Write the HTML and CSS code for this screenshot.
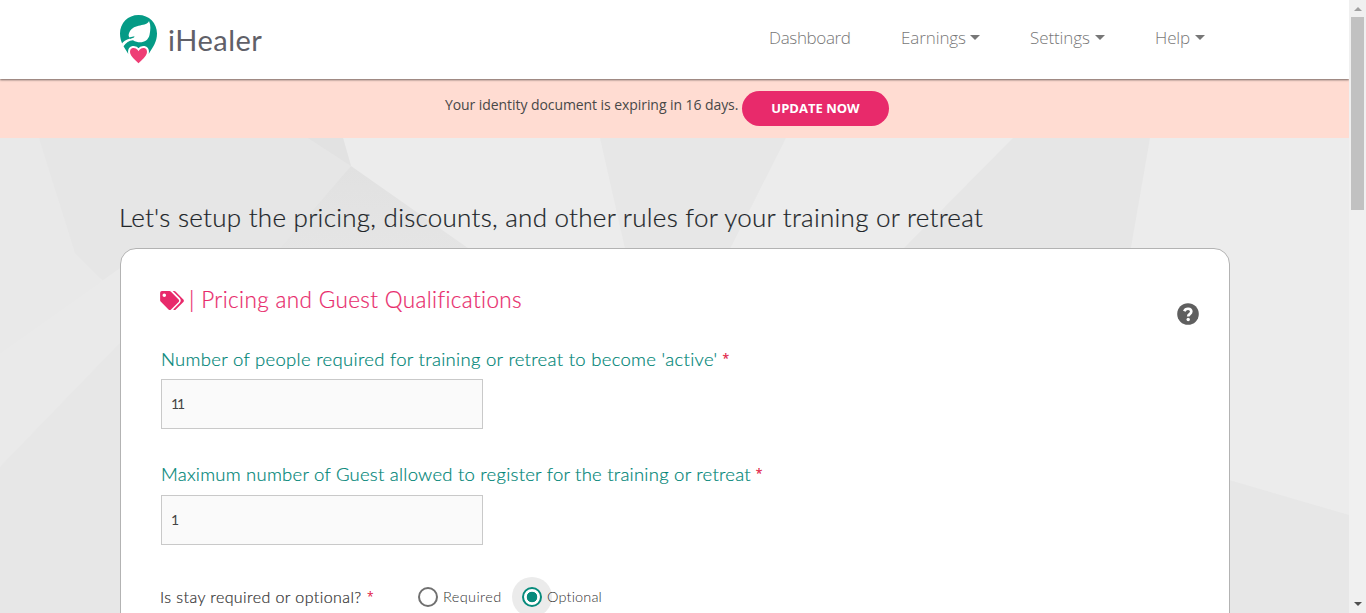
FILE: index.html
```html
<!DOCTYPE html>
<html lang="en">
<head>
<meta charset="utf-8">
<title>iHealer</title>
<link rel="stylesheet" href="styles.css">
</head>
<body>
<div class="page">
  <header class="header">
    <a class="logo">
      <svg class="logo-mark" viewBox="0 0 38 50" width="38" height="50">
        <path fill="#059b86" d="M18.500 0C8 0 0 8 0 18.500C0 27 4 32 8 38.500H29C33 32 37 27 37 18.500C37 8 29 0 18.500 0Z"/>
        <path fill="#fff" d="M29 6C27 12 14 8 9.500 17C8 20 8.500 21.500 10 23.500C6 24.500 3 26.500 1.700 29L3.300 31.500C6 28 9 25.500 13 25.300C20 29.500 28 27 29.500 20C30.500 15 31 10 29 6Z"/>
        <path fill="#059b86" d="M9 22.500L14.500 21.300L14 22.500L10 24Z"/>
        <path fill="#ee3e75" stroke="#fff" stroke-width="2" d="M18.500 50C16 46 9 43 9 37C9 31 15.500 30.500 18.500 34.500C21.500 30.500 28 31 28 37C28 43 21 46 18.500 50Z"/>
      </svg>
      <span class="logo-text">iHealer</span>
    </a>
    <nav class="nav">
      <a class="nav-item dashboard">Dashboard</a>
      <a class="nav-item earnings">Earnings<i class="caret"></i></a>
      <a class="nav-item settings">Settings<i class="caret"></i></a>
      <a class="nav-item help">Help<i class="caret"></i></a>
    </nav>
  </header>
  <div class="notice">
    <span class="notice-text">Your identity document is expiring in 16 days.</span>
    <button class="update">UPDATE NOW</button>
  </div>
  <main class="main">
    <svg class="facets" viewBox="0 0 1349 475" preserveAspectRatio="none">
      <defs>
        <linearGradient id="fade" x1="0" y1="0" x2="0" y2="1"><stop offset="0" stop-color="#e1e1e1"/><stop offset="1" stop-color="#e5e5e5"/></linearGradient>
      </defs>
      <rect width="1349" height="475" fill="#ececec"/>
      <path fill="#e9e9e9" d="M0 0H39L92 115L120 200V475H0Z"/>
      <path fill="#e6e6e6" d="M39 0H343L351 28L276 130H120V160L75 115Z"/>
      <path fill="#eaeaea" d="M0 215L120 130V235L0 355Z"/>
      <path fill="#e7e7e7" d="M0 340L120 325V475H0Z"/>
      <path fill="#e7e7e7" d="M0 329L120 205V475H0Z"/>
      <path fill="#e2e2e2" d="M308 0H343L351 28Z"/>
      <path fill="url(#fade)" d="M351 28L475 115H276Z"/>
      <path fill="#e7e7e7" d="M600 0H786L728 115H626Z"/>
      <path fill="#e6e6e6" d="M1013 0H1150L1130 115H899Z"/>
      <path fill="#e7e7e7" d="M1229 342L1349 377V475H1229Z"/>
    </svg>
    <h1 class="title">Let's setup the pricing, discounts, and other rules for your training or retreat</h1>
    <section class="card">
      <div class="card-head">
        <svg class="tags" viewBox="0 0 640 512" width="24" height="19"><path fill="#e82a6b" d="M497.900 225.900 286.100 14.100A48 48 0 0 0 252.100 0H48A48 48 0 0 0 0 48V252.100A48 48 0 0 0 14.100 286.100L225.900 497.900C244.700 516.700 275.100 516.700 293.800 497.900L497.900 293.800C516.700 275.100 516.700 244.700 497.900 225.900ZM112 160A48 48 0 1 1 112 64A48 48 0 0 1 112 160ZM625.900 293.800 421.800 497.900C403 516.700 372.600 516.700 353.900 497.900L353.500 497.500 527.600 323.500C545.600 305.400 555.600 281.400 555.600 256C555.600 230.500 545.600 206.500 527.600 188.500L339 0H380.100A48 48 0 0 1 414.100 14.100L625.900 225.900C644.700 244.700 644.700 275.100 625.900 293.800Z"/></svg>
        <h2 class="subtitle">| Pricing and Guest Qualifications</h2>
        <svg class="question" viewBox="0 0 22 22" width="22" height="22"><circle cx="11" cy="11" r="10.800" fill="#5f5f5f"/><path d="M7.300 8.200C8.500 4.800 14.300 5 14.300 8.600C14.300 11.300 11.200 11 11.200 13.500" fill="none" stroke="#fff" stroke-width="2.700"/><circle cx="11.200" cy="16.500" r="1.700" fill="#fff"/></svg>
      </div>
      <label class="label first"><span>Number of people required for training or retreat to become 'active'</span> <b class="star">*</b></label>
      <input class="field" type="text" value="11">
      <label class="label second"><span>Maximum number of Guest allowed to register for the training or retreat</span> <b class="star">*</b></label>
      <input class="field" type="text" value="1">
      <div class="stay">
        <span class="stay-text">Is stay required or optional?</span><b class="star stay-star">*</b>
        <span class="radio"></span><span class="choice">Required</span>
        <span class="halo"><span class="radio on"></span></span><span class="choice optional">Optional</span>
      </div>
    </section>
  </main>
</div>
<div class="scrollbar"><i class="up"></i><div class="thumb"></div><i class="down"></i></div>
</body>
</html>
```
FILE: styles.css
```css
* { box-sizing: border-box; }
body { margin: 0; height: 613px; overflow: hidden; display: flex; font-family: Lato, "Open Sans", sans-serif; font-weight: 300; }
.page { width: 1349px; height: 613px; overflow: hidden; display: flex; flex-direction: column; }
.header { height: 79px; flex: none; background: #fff; display: flex; padding: 0 0 0 120px; box-shadow: 0 1px 2px rgba(0,0,0,.55); position: relative; }
.logo { display: flex; width: 649px; padding-top: 15px; }
.logo-mark { flex: none; }
.logo-text { margin: 6px 0 0 10px; font: 400 29px/38px Lato, sans-serif; color: #606068; letter-spacing: .5px; }
.nav { display: flex; padding-top: 26px; }
.nav-item { font: 300 17px/24px "Open Sans", sans-serif; color: #777; white-space: nowrap; width: 132px; display: flex; align-items: flex-start; letter-spacing: -.1px; }
.nav-item.dashboard { letter-spacing: -.35px; }
.nav-item.earnings { width: 129px; }
.nav-item.settings { width: 125px; }
.caret { border: 5px solid transparent; border-top-color: #777; border-bottom: 0; margin: 9px 0 0 5px; }
.earnings .caret { margin-left: 4px; }
.notice { height: 59px; flex: none; background: #ffdcd2; display: flex; padding: 12px 0 0 445px; }
.notice-text { width: 297px; font: 400 14px/28px "Open Sans", sans-serif; color: #484848; white-space: nowrap; letter-spacing: -.07px; }
.update { width: 147px; height: 35px; padding: 0; border: 0; border-radius: 18px; background: #e82a6b; color: #fff; font: 700 13px/35px "Open Sans", sans-serif; }
.main { height: 475px; flex: none; position: relative; padding: 62px 0 0 120px; overflow: hidden; }
.facets { position: absolute; left: 0; top: 0; width: 1349px; height: 475px; z-index: -1; }
.title { margin: 0 0 0 -1px; height: 48px; font-size: 26px; line-height: 35px; font-weight: 300; color: #212529; white-space: nowrap; letter-spacing: .26px; -webkit-text-stroke: .2px; }
.card { width: 1110px; height: 420px; background: #fff; border: 1px solid #b3b3b3; border-radius: 16px; padding: 35px 30px 0 40px; display: flex; flex-direction: column; align-items: flex-start; }
.card-head { display: flex; width: 100%; height: 57px; flex: none; }
.tags { margin: 7px 5px 0 -1px; flex: none; }
.subtitle { margin: 0; font-size: 22.5px; line-height: 32px; font-weight: 300; color: #e82a6b; white-space: nowrap; letter-spacing: .37px; -webkit-text-stroke: .2px; }
.question { margin: 19px 0 0 auto; flex: none; }
.label { font-size: 18.5px; line-height: 36px; height: 38px; flex: none; color: #008577; white-space: nowrap; display: flex; gap: 5px; letter-spacing: .3px; -webkit-text-stroke: .2px; }
.star { color: #df1642; font: 400 12px/36px "Open Sans", sans-serif; letter-spacing: 0; }
.field { width: 322px; height: 50px; flex: none; border: 1px solid #c9c9c9; background: #fafafa; padding: 0 9px 2px; font: 400 14px Lato, sans-serif; color: #444; outline: 0; letter-spacing: -2px; }
.second { margin-top: 27px; height: 39px; letter-spacing: .24px; }
.stay { display: flex; height: 40px; margin-top: 32px; margin-left: -1px; align-items: center; white-space: nowrap; flex: none; color: #333; }
.stay-text { width: 207px; font-size: 16px; letter-spacing: .42px; -webkit-text-stroke: .2px; padding-bottom: 2px; }
.stay-star { width: 51px; }
.radio { width: 20px; height: 20px; flex: none; border: 2px solid #707070; border-radius: 50%; display: block; }
.choice { margin-left: 5px; width: 69px; font-size: 14.500px; letter-spacing: .4px; padding-bottom: 2px; }
.halo { width: 40px; height: 40px; border-radius: 50%; background: #ebebeb; display: grid; place-items: center; flex: none; }
.radio.on { border-color: #078b7c; background: radial-gradient(circle, #078b7c 5px, #fff 5.6px); }
.optional { margin-left: -5px; letter-spacing: .15px; }
.scrollbar { width: 17px; height: 613px; background: #f0f0f0; display: flex; flex-direction: column; align-items: center; flex: none; }
.up { border: 4px solid transparent; border-bottom-color: #a0a0a0; border-top: 0; margin: 7px 0 6px; }
.thumb { width: 13px; height: 193px; background: #c1c1c1; }
.down { border: 4px solid transparent; border-top-color: #505050; border-bottom: 0; margin: auto 0 7px; }
```
